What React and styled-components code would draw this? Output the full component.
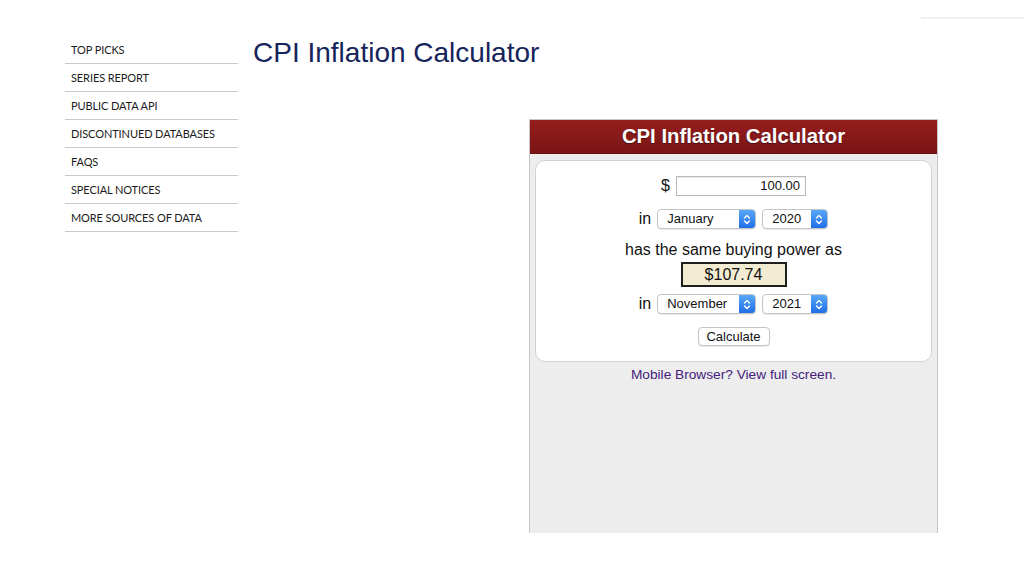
import styled, { createGlobalStyle } from "styled-components";

const GlobalStyle = createGlobalStyle`
  html, body {
    margin: 0;
    padding: 0;
    background: #fff;
  }
  body {
    font-family: "Liberation Sans", Arial, sans-serif;
    color: #111;
  }
`;

const navItems = [
  "Top Picks",
  "Series Report",
  "Public Data API",
  "Discontinued Databases",
  "FAQs",
  "Special Notices",
  "More Sources of Data",
];

const Chevrons = () => (
  <svg width="8" height="11" viewBox="0 0 8 11" fill="none">
    <path
      d="M1.5 4L4 1.6L6.5 4M1.5 7L4 9.4L6.5 7"
      stroke="#fff"
      strokeWidth="1.4"
      strokeLinecap="round"
      strokeLinejoin="round"
    />
  </svg>
);

const Select = ({ value, width }) => (
  <SelectBox $width={width}>
    <SelectText>{value}</SelectText>
    <SelectArrow>
      <Chevrons />
    </SelectArrow>
  </SelectBox>
);

const App = () => {
  return (
    <>
      <GlobalStyle />
      <TopStrip>
        <TopLine />
      </TopStrip>
      <Page>
        <Sidebar>
          {navItems.map((item) => (
            <NavItem key={item}>{item}</NavItem>
          ))}
        </Sidebar>

        <Main>
          <Title>CPI Inflation Calculator</Title>

          <Widget>
            <WidgetHeader>CPI Inflation Calculator</WidgetHeader>
            <WidgetBody>
              <Card>
                <Row $mt={0}>
                  <Label>$</Label>
                  <AmountInput>100.00</AmountInput>
                </Row>
                <Row $mt={13}>
                  <Label>in</Label>
                  <Select value="January" width={99} />
                  <Select value="2020" width={66} />
                </Row>
                <Sentence>has the same buying power as</Sentence>
                <Result>$107.74</Result>
                <Row $mt={7}>
                  <Label>in</Label>
                  <Select value="November" width={99} />
                  <Select value="2021" width={66} />
                </Row>
                <CalcButton>Calculate</CalcButton>
              </Card>
              <MobileLink>Mobile Browser? View full screen.</MobileLink>
            </WidgetBody>
          </Widget>
        </Main>
      </Page>
    </>
  );
};

export default App;

const TopStrip = styled.div`
  display: flex;
  justify-content: flex-end;
  height: 0;
`;

const TopLine = styled.div`
  width: 103px;
  height: 2px;
  margin-top: 17px;
  background: #f1f1f1;
`;

const Page = styled.div`
  display: flex;
  align-items: flex-start;
  padding-left: 65px;
  padding-top: 35px;
`;

const Sidebar = styled.nav`
  width: 173px;
  margin-top: 1px;
  display: flex;
  flex-direction: column;
`;

const NavItem = styled.div`
  height: 27px;
  line-height: 27px;
  padding-left: 6px;
  border-bottom: 1px solid #c9c9c9;
  font-family: Lato, "Liberation Sans", sans-serif;
  font-size: 11px;
  letter-spacing: -0.1px;
  text-transform: uppercase;
  color: #1c1c1c;
  cursor: pointer;
`;

const Main = styled.main`
  margin-left: 15px;
  display: flex;
  flex-direction: column;
`;

const Title = styled.h1`
  margin: 1px 0 0;
  font-family: "Liberation Sans", Arial, sans-serif;
  font-weight: normal;
  font-size: 28px;
  line-height: 34px;
  color: #15245a;
`;

const Widget = styled.section`
  margin-top: 49px;
  margin-left: 276px;
  width: 407px;
  height: 413px;
  border: 1px solid #c6c6c6;
  border-bottom: none;
  display: flex;
  flex-direction: column;
  background: #ededed;
`;

const WidgetHeader = styled.div`
  height: 34px;
  line-height: 33px;
  text-align: center;
  background: linear-gradient(#961d1d, #7a1515);
  border-bottom: 1px solid #6a1010;
  box-sizing: border-box;
  color: #fff;
  font-weight: bold;
  font-size: 20.3px;
  text-shadow: 0 1px 1px rgba(0, 0, 0, 0.45);
`;

const WidgetBody = styled.div`
  padding: 6px 5px 0;
  display: flex;
  flex-direction: column;
`;

const Card = styled.div`
  background: #fff;
  border: 1px solid #d2d2d2;
  border-radius: 10px;
  padding: 15px 0 15px;
  display: flex;
  flex-direction: column;
  align-items: center;
`;

const Row = styled.div`
  display: flex;
  align-items: center;
  gap: 6px;
  height: 20px;
  margin-top: ${({ $mt }) => $mt}px;
`;

const Label = styled.span`
  font-size: 16px;
  color: #111;
`;

const AmountInput = styled.div`
  width: 130px;
  height: 20px;
  box-sizing: border-box;
  border: 1px solid #b9b9b9;
  box-shadow: inset 0 1px 1px rgba(0, 0, 0, 0.08);
  text-align: right;
  padding-right: 5px;
  font-size: 13px;
  line-height: 18px;
  color: #111;
`;

const SelectBox = styled.div`
  width: ${({ $width }) => $width}px;
  height: 20px;
  box-sizing: border-box;
  display: flex;
  border: 1px solid #c4c4c4;
  border-radius: 4px;
  background: #fff;
  box-shadow: 0 1px 1px rgba(0, 0, 0, 0.08);
  overflow: hidden;
`;

const SelectText = styled.span`
  flex: 1;
  padding-left: 9px;
  font-size: 13px;
  line-height: 18px;
  color: #111;
`;

const SelectArrow = styled.span`
  width: 16px;
  display: flex;
  align-items: center;
  justify-content: center;
  background: linear-gradient(#5aa7fb, #1f6fe6);
`;

const Sentence = styled.div`
  margin-top: 11px;
  font-size: 16px;
  line-height: 20px;
  color: #111;
`;

const Result = styled.div`
  margin-top: 2px;
  width: 106px;
  height: 25px;
  box-sizing: border-box;
  border: 2px solid #1e1e1e;
  background: #f2ecd3;
  text-align: center;
  font-size: 16px;
  line-height: 21px;
  color: #111;
`;

const CalcButton = styled.button`
  margin-top: 13px;
  width: 72px;
  height: 19px;
  padding: 0;
  border: 1px solid #c4c4c4;
  border-radius: 4px;
  background: #fff;
  box-shadow: 0 1px 1px rgba(0, 0, 0, 0.08);
  font-family: "Liberation Sans", Arial, sans-serif;
  font-size: 13px;
  line-height: 17px;
  color: #111;
`;

const MobileLink = styled.a`
  margin-top: 5px;
  text-align: center;
  font-size: 13.7px;
  line-height: 16px;
  color: #43207c;
  cursor: pointer;
`;
